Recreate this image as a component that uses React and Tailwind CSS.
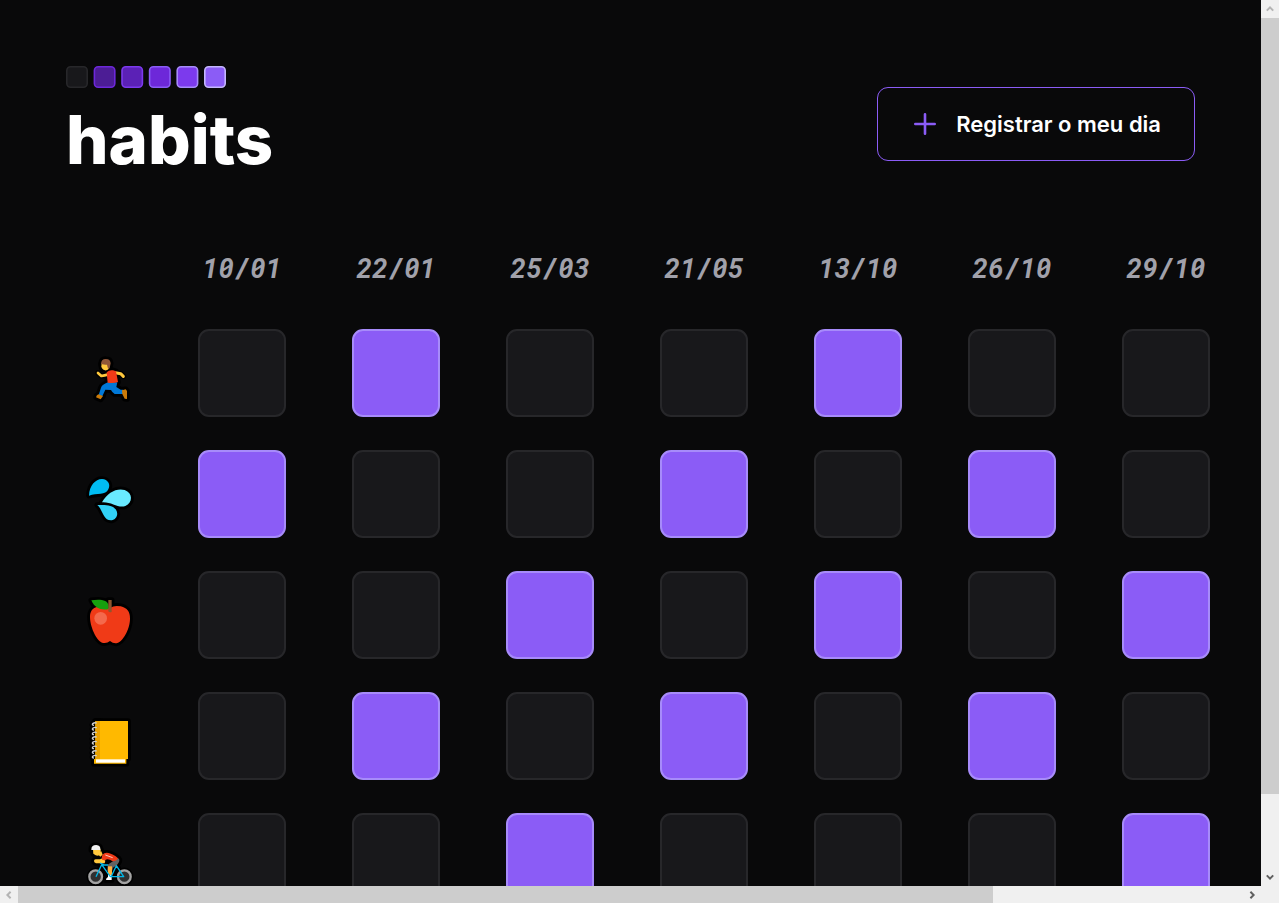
import React from "react";

const dates = ["10/01", "22/01", "25/03", "21/05", "13/10", "26/10", "29/10"];

const swatches = [
  ["#18181b", "#27272a"],
  ["#4c1d95", "#6d28d9"],
  ["#5b21b6", "#7c3aed"],
  ["#6d28d9", "#8b5cf6"],
  ["#7c3aed", "#a78bfa"],
  ["#8b5cf6", "#c4b5fd"],
];

function Emoji({ label, viewBox, children }) {
  return (
    <svg role="img" aria-label={label} viewBox={viewBox} className="mt-[14px] size-[60px]">
      <g strokeLinejoin="round" className="[&_*]:fill-black [&_*]:stroke-black [&_*]:stroke-[17px]">
        {children}
      </g>
      {children}
    </svg>
  );
}

function Runner() {
  return (
    <Emoji label="Exercício" viewBox="0 0 180 180">
      <path d="M54 69L64 78Q72 76 86 73" fill="none" stroke="#ffc83d" strokeWidth="8" strokeLinecap="round" strokeLinejoin="round" />
      <path d="M106 68L122 71L130 79" fill="none" stroke="#ffc83d" strokeWidth="9" strokeLinecap="round" strokeLinejoin="round" />
      <path d="M65 38H88V55Q83 62 75 61Q65 58 64 49Z" fill="#ffc83d" />
      <path d="M63 42Q64 26 78 27Q91 27 92 40Q91 52 85 58Q82 49 81 44Q73 45 63 42Z" fill="#8f5638" />
      <path d="M84 97H112L109 111L122 119H129V132H104Q97 128 93 120L76 119L67 139L56 135L63 113Q66 104 84 97Z" fill="#0078d7" />
      <path d="M80 67Q88 59 99 61L108 64L114 96Q102 101 83 98Z" fill="#f03a17" />
      <path d="M55 133L69 138L62 148L48 142Q49 136 55 133Z" fill="#ca7a09" />
      <path d="M126 121L137 118L141 123V147L134 146L127 132Z" fill="#ca7a09" />
    </Emoji>
  );
}

function Drops() {
  return (
    <Emoji label="Água" viewBox="0 3 180 180">
      <path d="M27 77C28 47 46 27 66 27C84 28 93 44 85 58C77 76 51 69 27 77Z" fill="#00bcf2" />
      <path d="M66 97C82 67 111 53 134 60C159 69 159 98 136 108C115 116 95 95 66 97Z" fill="#69eaff" />
      <path d="M52 105C77 104 97 104 108 119C117 134 108 149 95 151C69 153 68 118 52 105Z" fill="#31d2f7" />
    </Emoji>
  );
}

function Apple() {
  return (
    <Emoji label="Alimentação" viewBox="0 6 180 180">
      <path d="M30 78C31 58 47 46 65 52Q77 58 91 53Q103 45 122 49C142 54 150 65 150 86C150 118 127 157 109 160Q99 161 90 153Q80 162 66 158C49 151 29 109 30 78Z" fill="#f03a17" />
      <path d="M34 31C55 28 84 27 86 48V57C65 62 44 55 34 31Z" fill="#16a10e" />
      <path d="M85 30H95V65Q90 69 85 64Z" fill="#8e562e" />
      <circle cx="62" cy="85" r="19" fill="#f4694c" />
    </Emoji>
  );
}

function Notebook() {
  return (
    <Emoji label="Leitura" viewBox="0 9 180 180">
      <path d="M46 33H144V147H139V161H42V147H46Z" fill="#ffb900" />
      <path d="M46 33H60V147H46Z" fill="#eaa300" />
      <path d="M48 148H135V158H48Z" fill="#fff" />
      {[41, 55, 69, 83, 97, 111, 125, 139].map((y) => (
        <path key={y} d={`M50 ${y - 1}Q45 ${y - 5} 38 ${y}Q35 ${y + 5} 42 ${y + 5}`} fill="none" stroke="#cfcfcf" strokeWidth="4" />
      ))}
    </Emoji>
  );
}

function Cyclist() {
  return (
    <Emoji label="Pedalar" viewBox="0 -3 180 180">
      <circle cx="47" cy="125" r="19" fill="#303030" stroke="#a3a3a3" strokeWidth="7" />
      <circle cx="133" cy="125" r="19" fill="#303030" stroke="#a3a3a3" strokeWidth="7" />
      <path d="M39 43H62V57Q56 64 47 61L40 56Z" fill="#ffc83d" />
      <path d="M53 57L64 49L68 59L61 65Z" fill="#ffc83d" />
      <path d="M67 70L76 77L74 85H48Q41 82 42 77Q43 73 48 73H60Z" fill="#ffc83d" />
      <path d="M108 69Q119 68 118 78Q114 90 99 98L96 108H82L83 89L100 78Z" fill="#636363" />
      <path d="M67 75Q62 61 73 55Q84 49 107 64L114 70Q110 79 98 79Q83 69 75 76Z" fill="#f03a17" />
      <path d="M76 60L98 68" fill="none" stroke="#ffc9bd" strokeWidth="3" />
      <path d="M34 45Q33 30 49 30Q63 32 61 45Z" fill="#f2f2f2" />
      <path d="M84 94H96V126H84Z" fill="#ffb23d" />
      <path d="M84 120H95V135H78Q78 129 84 126Z" fill="#fff" />
      <path d="M48 125L65 89L91 125H131L109 92L94 124M65 90H84M60 84L71 89" fill="none" stroke="#00b7e8" strokeWidth="4" strokeLinejoin="round" />
    </Emoji>
  );
}

const habits = [
  { name: "run", Icon: Runner, done: [0, 1, 0, 0, 1, 0, 0] },
  { name: "water", Icon: Drops, done: [1, 0, 0, 1, 0, 1, 0] },
  { name: "food", Icon: Apple, done: [0, 0, 1, 0, 1, 0, 1] },
  { name: "journal", Icon: Notebook, done: [0, 1, 0, 1, 0, 1, 0] },
  { name: "bike", Icon: Cyclist, done: [0, 0, 1, 0, 0, 0, 1] },
];

function Logo() {
  return (
    <div>
      <svg viewBox="0 0 160 22" className="h-[22px] w-[160px]" aria-hidden="true">
        {swatches.map(([fill, stroke], i) => (
          <rect key={fill} x={0.8 + i * 27.6} y="0.8" width="20.4" height="20.4" rx="3.8" fill={fill} stroke={stroke} strokeWidth="1.6" />
        ))}
      </svg>
      <h1 className="mt-4 pb-[6px] text-[67px] leading-[72px] font-extrabold">habits</h1>
    </div>
  );
}

function Chevron({ turn, color }) {
  return (
    <svg viewBox="0 0 10 10" className={`size-[10px] ${turn}`} fill="none" stroke={color} strokeWidth="2" aria-hidden="true">
      <path d="M1.8 6.6L5 3.4L8.2 6.6" />
    </svg>
  );
}

export default function App() {
  return (
    <div className="flex h-screen flex-col bg-[#09090a] font-['Inter',sans-serif] text-white">
      <div className="flex min-h-0 flex-1">
        <main className="min-w-0 flex-1 overflow-hidden pt-[66px] pl-[66px]">
          <header className="flex items-center justify-between pr-[66px]">
            <Logo />
            <button type="button" className="flex items-center gap-[17px] rounded-[11px] border border-[#8b5cf6] px-[33px] py-5 text-[22px] leading-8 font-semibold">
              <svg viewBox="0 0 28 28" className="size-[28px]" fill="none" stroke="#8b5cf6" strokeWidth="2.6" strokeLinecap="round" aria-hidden="true">
                <path d="M4.3 14H23.7M14 4.3V23.7" />
              </svg>
              Registrar o meu dia
            </button>
          </header>

          <table className="mt-[66px] w-max border-separate border-spacing-0">
            <thead>
              <tr>
                <td className="p-0" />
                {dates.map((date) => (
                  <th key={date} scope="col" className="pr-[66px] pb-[41px] text-center font-['Roboto_Mono','DejaVu_Sans_Mono',monospace] text-[27px] leading-10 font-bold text-[#a1a1aa] italic">
                    <span className="flex w-[88px] justify-center">{date}</span>
                  </th>
                ))}
              </tr>
            </thead>
            <tbody>
              {habits.map(({ name, Icon, done }) => (
                <tr key={name}>
                  <th scope="row" className="pr-[44px] pb-[33px]">
                    <div className="flex size-[88px] items-center justify-center">
                      <Icon />
                    </div>
                  </th>
                  {done.map((isDone, i) => (
                    <td key={dates[i]} className="pr-[66px] pb-[33px]">
                      <div className={isDone ? "size-[88px] rounded-[11px] border-2 border-[#a78bfa] bg-[#8b5cf6]" : "size-[88px] rounded-[11px] border-2 border-[#27272a] bg-[#18181b]"} />
                    </td>
                  ))}
                </tr>
              ))}
            </tbody>
          </table>
        </main>

        <div className="flex w-[18px] flex-col bg-[#f0f0f0]">
          <div className="flex h-[18px] items-center justify-center">
            <Chevron turn="rotate-0" color="#b4b4b4" />
          </div>
          <div className="min-h-0 flex-[776] bg-[#cdcdcd]" />
          <div className="min-h-0 flex-[74]" />
          <div className="flex h-[18px] items-center justify-center">
            <Chevron turn="rotate-180" color="#606060" />
          </div>
        </div>
      </div>

      <div className="flex h-[17px] bg-[#f0f0f0] pr-[18px]">
        <div className="flex w-[18px] items-center justify-center">
          <Chevron turn="-rotate-90" color="#b4b4b4" />
        </div>
        <div className="flex-[975] bg-[#cdcdcd]" />
        <div className="flex-[250]" />
        <div className="flex w-[18px] items-center justify-center">
          <Chevron turn="rotate-90" color="#606060" />
        </div>
      </div>
    </div>
  );
}
